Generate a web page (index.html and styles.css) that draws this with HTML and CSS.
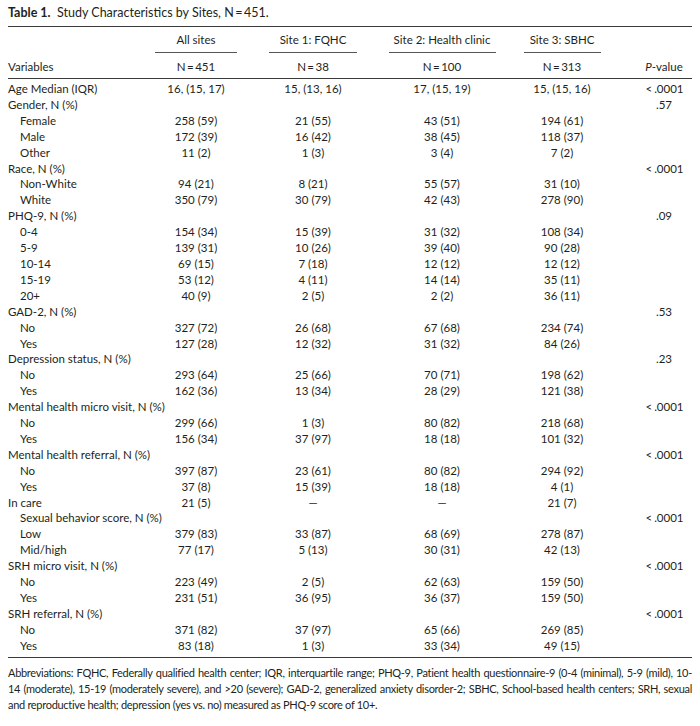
FILE: index.html
```html
<!DOCTYPE html>
<html>
<head>
<meta charset="utf-8">
<link rel="stylesheet" href="styles.css">
</head>
<body>
<div class="page">
  <div class="title"><b>Table 1.</b>&nbsp; Study Characteristics by Sites, N&thinsp;=&thinsp;451.</div>
  <table class="tbl">
    <colgroup>
      <col class="c-var"><col class="c-all"><col class="c-s1"><col class="c-s2"><col class="c-s3"><col class="c-p">
    </colgroup>
    <thead>
      <tr class="h1">
        <th></th>
        <th><div class="grp g-all">All sites</div></th>
        <th><div class="grp g-s1">Site 1: FQHC</div></th>
        <th><div class="grp g-s2">Site 2: Health clinic</div></th>
        <th><div class="grp g-s3">Site 3: SBHC</div></th>
        <th></th>
      </tr>
      <tr class="h2">
        <th class="lbl">Variables</th>
        <th>N&thinsp;=&thinsp;451</th>
        <th>N&thinsp;=&thinsp;38</th>
        <th>N&thinsp;=&thinsp;100</th>
        <th>N&thinsp;=&thinsp;313</th>
        <th class="pv"><i>P</i>-value</th>
      </tr>
    </thead>
    <tbody>
      <tr class="first"><td class="lbl">Age Median (IQR)</td><td>16, (15, 17)</td><td>15, (13, 16)</td><td>17, (15, 19)</td><td>15, (15, 16)</td><td class="pv"><span class="lt">&lt;</span>.0001</td></tr>
      <tr><td class="lbl">Gender, N (%)</td><td></td><td></td><td></td><td></td><td class="pv">.57</td></tr>
      <tr><td class="lbl sub">Female</td><td>258 (59)</td><td>21 (55)</td><td>43 (51)</td><td>194 (61)</td><td class="pv"></td></tr>
      <tr><td class="lbl sub">Male</td><td>172 (39)</td><td>16 (42)</td><td>38 (45)</td><td>118 (37)</td><td class="pv"></td></tr>
      <tr><td class="lbl sub">Other</td><td>11 (2)</td><td>1 (3)</td><td>3 (4)</td><td>7 (2)</td><td class="pv"></td></tr>
      <tr><td class="lbl">Race, N (%)</td><td></td><td></td><td></td><td></td><td class="pv"><span class="lt">&lt;</span>.0001</td></tr>
      <tr><td class="lbl sub">Non-White</td><td>94 (21)</td><td>8 (21)</td><td>55 (57)</td><td>31 (10)</td><td class="pv"></td></tr>
      <tr><td class="lbl sub">White</td><td>350 (79)</td><td>30 (79)</td><td>42 (43)</td><td>278 (90)</td><td class="pv"></td></tr>
      <tr><td class="lbl">PHQ-9, N (%)</td><td></td><td></td><td></td><td></td><td class="pv">.09</td></tr>
      <tr><td class="lbl sub">0-4</td><td>154 (34)</td><td>15 (39)</td><td>31 (32)</td><td>108 (34)</td><td class="pv"></td></tr>
      <tr><td class="lbl sub">5-9</td><td>139 (31)</td><td>10 (26)</td><td>39 (40)</td><td>90 (28)</td><td class="pv"></td></tr>
      <tr><td class="lbl sub">10-14</td><td>69 (15)</td><td>7 (18)</td><td>12 (12)</td><td>12 (12)</td><td class="pv"></td></tr>
      <tr><td class="lbl sub">15-19</td><td>53 (12)</td><td>4 (11)</td><td>14 (14)</td><td>35 (11)</td><td class="pv"></td></tr>
      <tr><td class="lbl sub">20+</td><td>40 (9)</td><td>2 (5)</td><td>2 (2)</td><td>36 (11)</td><td class="pv"></td></tr>
      <tr><td class="lbl">GAD-2, N (%)</td><td></td><td></td><td></td><td></td><td class="pv">.53</td></tr>
      <tr><td class="lbl sub">No</td><td>327 (72)</td><td>26 (68)</td><td>67 (68)</td><td>234 (74)</td><td class="pv"></td></tr>
      <tr><td class="lbl sub">Yes</td><td>127 (28)</td><td>12 (32)</td><td>31 (32)</td><td>84 (26)</td><td class="pv"></td></tr>
      <tr><td class="lbl">Depression status, N (%)</td><td></td><td></td><td></td><td></td><td class="pv">.23</td></tr>
      <tr><td class="lbl sub">No</td><td>293 (64)</td><td>25 (66)</td><td>70 (71)</td><td>198 (62)</td><td class="pv"></td></tr>
      <tr><td class="lbl sub">Yes</td><td>162 (36)</td><td>13 (34)</td><td>28 (29)</td><td>121 (38)</td><td class="pv"></td></tr>
      <tr><td class="lbl">Mental health micro visit, N (%)</td><td></td><td></td><td></td><td></td><td class="pv"><span class="lt">&lt;</span>.0001</td></tr>
      <tr><td class="lbl sub">No</td><td>299 (66)</td><td>1 (3)</td><td>80 (82)</td><td>218 (68)</td><td class="pv"></td></tr>
      <tr><td class="lbl sub">Yes</td><td>156 (34)</td><td>37 (97)</td><td>18 (18)</td><td>101 (32)</td><td class="pv"></td></tr>
      <tr><td class="lbl">Mental health referral, N (%)</td><td></td><td></td><td></td><td></td><td class="pv"><span class="lt">&lt;</span>.0001</td></tr>
      <tr><td class="lbl sub">No</td><td>397 (87)</td><td>23 (61)</td><td>80 (82)</td><td>294 (92)</td><td class="pv"></td></tr>
      <tr><td class="lbl sub">Yes</td><td>37 (8)</td><td>15 (39)</td><td>18 (18)</td><td>4 (1)</td><td class="pv"></td></tr>
      <tr><td class="lbl">In care</td><td>21 (5)</td><td>—</td><td>—</td><td>21 (7)</td><td class="pv"></td></tr>
      <tr><td class="lbl sub">Sexual behavior score, N (%)</td><td></td><td></td><td></td><td></td><td class="pv"><span class="lt">&lt;</span>.0001</td></tr>
      <tr><td class="lbl sub">Low</td><td>379 (83)</td><td>33 (87)</td><td>68 (69)</td><td>278 (87)</td><td class="pv"></td></tr>
      <tr><td class="lbl sub">Mid/high</td><td>77 (17)</td><td>5 (13)</td><td>30 (31)</td><td>42 (13)</td><td class="pv"></td></tr>
      <tr><td class="lbl">SRH micro visit, N (%)</td><td></td><td></td><td></td><td></td><td class="pv"><span class="lt">&lt;</span>.0001</td></tr>
      <tr><td class="lbl sub">No</td><td>223 (49)</td><td>2 (5)</td><td>62 (63)</td><td>159 (50)</td><td class="pv"></td></tr>
      <tr><td class="lbl sub">Yes</td><td>231 (51)</td><td>36 (95)</td><td>36 (37)</td><td>159 (50)</td><td class="pv"></td></tr>
      <tr><td class="lbl">SRH referral, N (%)</td><td></td><td></td><td></td><td></td><td class="pv"><span class="lt">&lt;</span>.0001</td></tr>
      <tr><td class="lbl sub">No</td><td>371 (82)</td><td>37 (97)</td><td>65 (66)</td><td>269 (85)</td><td class="pv"></td></tr>
      <tr class="last"><td class="lbl sub">Yes</td><td>83 (18)</td><td>1 (3)</td><td>33 (34)</td><td>49 (15)</td><td class="pv"></td></tr>
    </tbody>
  </table>
  <div class="notes">
    <div class="nl">Abbreviations: FQHC, Federally qualified health center; IQR, interquartile range; PHQ-9, Patient health questionnaire-9 (0-4 (minimal), 5-9 (mild), 10-</div>
    <div class="nl">14 (moderate), 15-19 (moderately severe), and &gt;20 (severe); GAD-2, generalized anxiety disorder-2; SBHC, School-based health centers; SRH, sexual</div>
    <div class="nl end">and reproductive health; depression (yes vs. no) measured as PHQ-9 score of 10+.</div>
  </div>
</div>
</body>
</html>
```

FILE: styles.css
```css
html, body {
  margin: 0;
  padding: 0;
  background: #ffffff;
}

body {
  font-family: Lato, "Open Sans", "Liberation Sans", sans-serif;
  color: #231f20;
  font-size: 11.5px;
}

.page {
  width: 684px;
  padding: 5px 8px 0 8px;
}

.title {
  font-size: 12.5px;
  line-height: 16px;
  margin-bottom: 5px;
}

.title b {
  font-weight: 700;
}

.tbl {
  width: 684px;
  border-collapse: collapse;
  table-layout: fixed;
  border-top: 1px solid #3a3a3a;
  border-bottom: 1px solid #3a3a3a;
}

.c-var { width: 138px; }
.c-all { width: 100px; }
.c-s1 { width: 134px; }
.c-s2 { width: 124px; }
.c-s3 { width: 116px; }
.c-p { width: 72px; }

.tbl th,
.tbl td {
  padding: 0;
  font-weight: 400;
  text-align: center;
  white-space: nowrap;
}

.h1 th {
  padding-top: 6px;
  line-height: 14px;
  padding-bottom: 0;
  vertical-align: bottom;
}

.grp {
  margin: 0 auto;
  padding-bottom: 5px;
  border-bottom: 1px solid #555555;
}

.g-all { width: 82px; }
.g-s1 { width: 88px; }
.g-s2 { width: 107px; }
.g-s3 { width: 77px; }

.h2 th {
  padding-top: 7px;
  padding-bottom: 4px;
  line-height: 14px;
  border-bottom: 1px solid #3a3a3a;
}

.tbl td {
  height: 15.9px;
  line-height: 15.9px;
}

.tbl .first td {
  padding-top: 2px;
}

.tbl .last td {
  padding-bottom: 3px;
}

.tbl .lbl {
  text-align: left;
}

.tbl .sub {
  padding-left: 12px;
}

.tbl .pv {
  padding-left: 16px;
}

.lt {
  margin-right: 2px;
  margin-left: 1px;
}

.notes {
  margin-top: 7px;
  font-size: 11px;
  line-height: 16px;
  letter-spacing: -0.3px;
}

.nl {
  white-space: nowrap;
  text-align: justify;
  text-align-last: justify;
}

.nl.end {
  text-align: left;
  text-align-last: left;
}
```
